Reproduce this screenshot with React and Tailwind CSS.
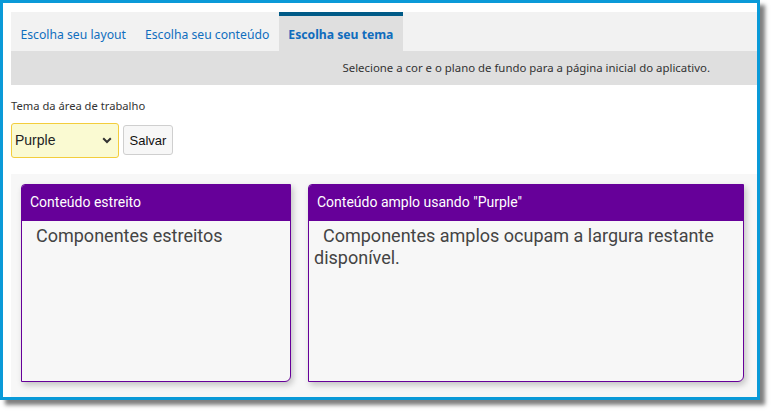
import React from 'react';

// Theme picker page: tabs, theme select and a preview of narrow / wide content cards
const TABS = ['Escolha seu layout', 'Escolha seu conteúdo', 'Escolha seu tema'];

function Card({ title, children, className = '' }) {
  return (
    <div className={`flex flex-col rounded-tl-[4px] rounded-br-[6px] border border-[#660099] bg-[#f7f7f7] shadow-[2px_3px_6px_rgba(0,0,0,0.22)] ${className}`}>
      <div className="h-[36px] shrink-0 rounded-tl-[3px] bg-[#660099] px-[8px] flex items-center text-[14px] text-white font-['Roboto',sans-serif]">
        {title}
      </div>
      <div className="px-[5px] pt-[4px] indent-[9px] text-[18px] leading-[22px] text-[#444] font-['Roboto',sans-serif]">
        {children}
      </div>
    </div>
  );
}

export default function App() {
  const active = 2;
  return (
    <div className="w-[772px] h-[413px] bg-white">
      <div className="w-[760px] h-[400px] border-[3px] border-[#0a9ad8] bg-white shadow-[5px_5px_4px_rgba(0,0,0,0.5)] flex flex-col pl-[8px] pt-[9px] font-['Noto_Sans',sans-serif]">
        {/* Tabs */}
        <div className="h-[39px] bg-[#f2f2f2] flex">
          {TABS.map((t, i) => (
            <div
              key={t}
              className={`px-[9.5px] flex items-center pt-[4px] border-t-[4px] text-[12.2px] ${
                i === active
                  ? 'bg-[#dfdfdf] border-[#005a87] font-bold text-[#0f6cbd]'
                  : 'border-transparent text-[#106ebe]'
              }`}
            >
              {t}
            </div>
          ))}
        </div>
        <div className="h-[34px] bg-[#dfdfdf] flex items-center justify-end pr-[47px] text-[11.4px] text-[#333]">
          Selecione a cor e o plano de fundo para a página inicial do aplicativo.
        </div>

        {/* Theme select */}
        <div className="mt-[13px] text-[11.2px] text-[#333]">Tema da área de trabalho</div>
        <div className="mt-[8px] flex items-center gap-[4px]">
          <div className="relative">
            <select
              defaultValue="Purple"
              className="w-[108px] h-[35px] appearance-none rounded-[3px] border border-[#f3cd3c] bg-[#fafad2] pl-[3px] text-[14px] text-[#222] font-['Liberation_Sans',Arial,sans-serif] outline-none"
            >
              <option>Purple</option>
              <option>Blue</option>
              <option>Green</option>
            </select>
            <svg className="pointer-events-none absolute right-[7px] top-[14px]" width="10" height="7" viewBox="0 0 10 7">
              <path d="M1.2 1.2 L5 5 L8.8 1.2" fill="none" stroke="#333" strokeWidth="2" />
            </svg>
          </div>
          <button className="h-[30px] px-[5.5px] rounded-[3px] border border-[#cfcfcf] bg-[#f7f7f7] text-[13px] text-[#111] font-['Liberation_Sans',Arial,sans-serif]">
            Salvar
          </button>
        </div>

        {/* Preview */}
        <div className="mt-[16px] flex-1 bg-[#f7f7f7] flex gap-[17px] pt-[10px] pl-[10px] pr-[13px] pb-[15px]">
          <Card title="Conteúdo estreito" className="w-[270px]">
            Componentes estreitos
          </Card>
          <Card title='Conteúdo amplo usando "Purple"' className="flex-1">
            Componentes amplos ocupam a largura restante disponível.
          </Card>
        </div>
      </div>
    </div>
  );
}
